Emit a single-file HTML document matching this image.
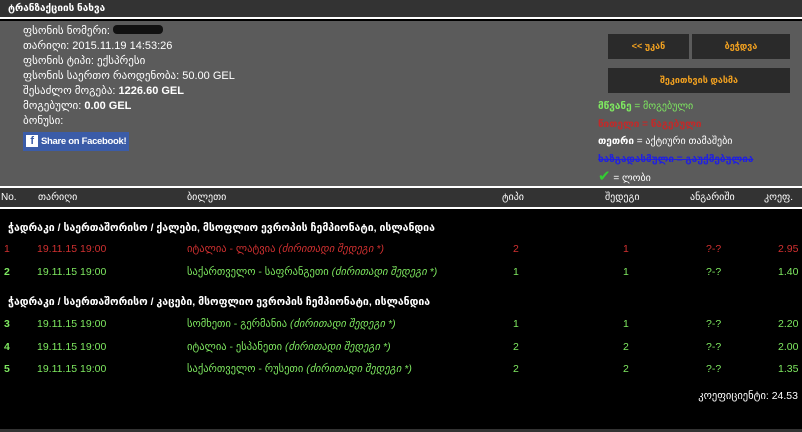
<!DOCTYPE html>
<html><head><meta charset="utf-8"><style>
*{margin:0;padding:0;box-sizing:border-box}
body{width:802px;height:432px;overflow:hidden;background:#000;font-family:"Liberation Sans","DejaVu Sans",sans-serif;position:relative;color:#fff}
.a{position:absolute;white-space:nowrap}
.top{position:absolute;left:0;top:0;width:802px;height:19px;background:#333;border-bottom:2px solid #fff}
.grey{position:absolute;left:0;top:21px;width:802px;height:165px;background:#5b5b5b}
.info{font-size:11px;line-height:15px;left:23px;top:24px}
.btn{position:absolute;background:#2a2a2a;color:#f0a020;font-size:9px;text-align:center;line-height:25px;font-weight:bold}
.th{position:absolute;left:0;top:186px;width:802px;height:23px;background:#333;border-top:2px solid #fff;border-bottom:2px solid #fff;font-size:10px}
.r{font-size:10.5px}
.g{color:#7ee860}.rd{color:#d03030}
</style></head><body>
<div class="top"></div>
<div class="a" style="left:8px;top:3px;font-size:10px;font-weight:bold">ტრანზაქციის ნახვა</div>
<div class="grey"></div>
<div class="a info">ფსონის ნომერი: <span style="background:#111;display:inline-block;width:50px;height:9px;border-radius:4px"></span><br>თარიღი: 2015.11.19 14:53:26<br>ფსონის ტიპი: ექსპრესი<br>ფსონის საერთო რაოდენობა: 50.00 GEL<br>შესაძლო მოგება: <b>1226.60 GEL</b><br>მოგებული: <b>0.00 GEL</b><br>ბონუსი:</div>
<div class="a" style="left:23px;top:132px;width:106px;height:19px;background:#3b5ca8;font-size:9.5px;line-height:19px;padding-left:18px;font-weight:bold;letter-spacing:-0.3px;overflow:hidden">Share on Facebook!<span style="position:absolute;left:3px;top:3px;width:12px;height:12px;background:#fff;color:#3b5ca8;font-size:11px;line-height:13px;text-align:center">f</span></div>
<div class="btn" style="left:608px;top:34px;width:81px;height:25px">&lt;&lt; უკან</div>
<div class="btn" style="left:692px;top:34px;width:98px;height:25px">ბეჭდვა</div>
<div class="btn" style="left:608px;top:68px;width:182px;height:25px">შეკითხვის დასმა</div>
<div class="a" style="left:598px;top:98px;font-size:10px;line-height:17.5px;font-weight:bold">
<span class="g">მწვანე</span><span class="g" style="font-weight:normal"> = მოგებული</span><br>
<span style="color:#c02a2a">წითელი = წაგებული</span><br>
<span>თეთრი</span><span style="font-weight:normal"> = აქტიური თამაშები</span><br>
<span style="color:#2020e0;text-decoration:line-through">ხაზგადასმული = გაუქმებულია</span><br>
<span style="color:#3c3;font-size:15px">✔</span><span style="font-weight:normal"> = ლობი</span></div>
<div class="th">
<span class="a" style="left:1px;top:4px">No.</span>
<span class="a" style="left:38px;top:4px">თარიღი</span>
<span class="a" style="left:187px;top:4px">ბილეთი</span>
<span class="a" style="left:502px;top:4px">ტიპი</span>
<span class="a" style="left:605px;top:4px">შედეგი</span>
<span class="a" style="left:690px;top:4px">ანგარიში</span>
<span class="a" style="left:764px;top:4px">კოეფ.</span>
</div>
<div class="a r" style="left:8px;top:222px;font-weight:bold">ჭადრაკი / საერთაშორისო / ქალები, მსოფლიო ევროპის ჩემპიონატი, ისლანდია</div>
<div class="a r rd" style="left:4px;top:243px">1</div><div class="a r rd" style="left:37px;top:243px">19.11.15 19:00</div><div class="a r rd" style="left:187px;top:243px">იტალია - ლატვია <i>(ძირითადი შედეგი *)</i></div><div class="a r rd" style="left:513px;top:243px">2</div><div class="a r rd" style="left:623px;top:243px">1</div><div class="a r rd" style="left:706px;top:243px">?-?</div><div class="a r rd" style="left:778px;top:243px">2.95</div>
<div class="a r g" style="left:4px;top:266px;font-weight:bold">2</div><div class="a r g" style="left:37px;top:266px">19.11.15 19:00</div><div class="a r g" style="left:187px;top:266px">საქართველო - საფრანგეთი <i>(ძირითადი შედეგი *)</i></div><div class="a r g" style="left:513px;top:266px">1</div><div class="a r g" style="left:623px;top:266px">1</div><div class="a r g" style="left:706px;top:266px">?-?</div><div class="a r g" style="left:778px;top:266px">1.40</div>
<div class="a r" style="left:8px;top:296px;font-weight:bold">ჭადრაკი / საერთაშორისო / კაცები, მსოფლიო ევროპის ჩემპიონატი, ისლანდია</div>
<div class="a r g" style="left:4px;top:318px;font-weight:bold">3</div><div class="a r g" style="left:37px;top:318px">19.11.15 19:00</div><div class="a r g" style="left:187px;top:318px">სომხეთი - გერმანია <i>(ძირითადი შედეგი *)</i></div><div class="a r g" style="left:513px;top:318px">1</div><div class="a r g" style="left:623px;top:318px">1</div><div class="a r g" style="left:706px;top:318px">?-?</div><div class="a r g" style="left:778px;top:318px">2.20</div>
<div class="a r g" style="left:4px;top:341px;font-weight:bold">4</div><div class="a r g" style="left:37px;top:341px">19.11.15 19:00</div><div class="a r g" style="left:187px;top:341px">იტალია - ესპანეთი <i>(ძირითადი შედეგი *)</i></div><div class="a r g" style="left:513px;top:341px">2</div><div class="a r g" style="left:623px;top:341px">2</div><div class="a r g" style="left:706px;top:341px">?-?</div><div class="a r g" style="left:778px;top:341px">2.00</div>
<div class="a r g" style="left:4px;top:363px;font-weight:bold">5</div><div class="a r g" style="left:37px;top:363px">19.11.15 19:00</div><div class="a r g" style="left:187px;top:363px">საქართველო - რუსეთი <i>(ძირითადი შედეგი *)</i></div><div class="a r g" style="left:513px;top:363px">2</div><div class="a r g" style="left:623px;top:363px">2</div><div class="a r g" style="left:706px;top:363px">?-?</div><div class="a r g" style="left:778px;top:363px">1.35</div>
<div class="a r" style="right:4px;top:390px">კოეფიციენტი: 24.53</div>
<div class="a" style="left:0;top:429px;width:802px;height:3px;background:#333"></div>
</body></html>
